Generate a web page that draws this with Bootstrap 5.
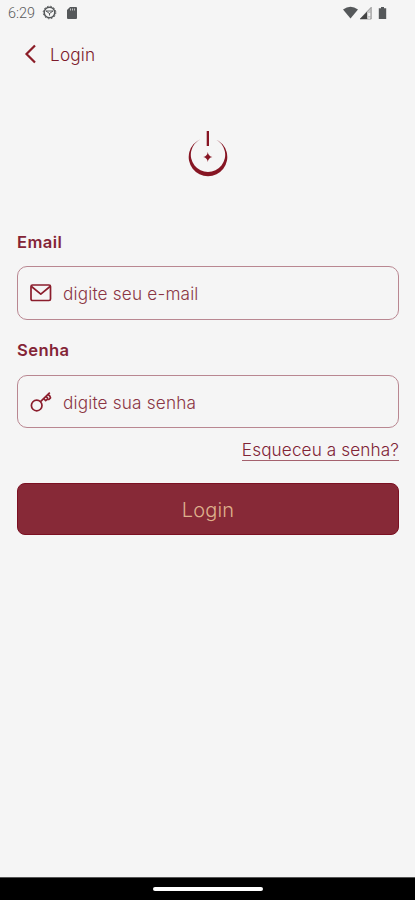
<!DOCTYPE html>
<html lang="pt-BR">
<head>
<meta charset="utf-8">
<meta name="viewport" content="width=device-width, initial-scale=1">
<title>Login</title>
<link href="https://cdn.jsdelivr.net/npm/bootstrap@5.3.0/dist/css/bootstrap.min.css" rel="stylesheet">
<style>
:root{--wine:#7d1a2b}
body{font-family:Inter,"Liberation Sans",sans-serif;background:#f5f5f5;color:var(--wine);height:900px;overflow:hidden}
svg{display:block;flex:none}
.status-bar{height:25px;padding:0 27px 0 8px;color:#55585a}
.clock{font:300 14.4px/25px Roboto,sans-serif;width:34px;color:#5a5a5a;padding-top:1px}
.top-bar{height:58px;padding-left:24px}
.top-title{font-size:17.2px;font-weight:300;letter-spacing:.2px;margin-left:12px;padding-top:1px}
.brand-mark{padding-top:47px;height:147px}
.login-form{padding-left:1px}
.field-label{font-size:16.6px;font-weight:600;line-height:24px;letter-spacing:.4px;color:#842436}
.field-box{border:1px solid #b98791;border-radius:10px;padding-left:11px;height:54px;margin-top:12px}
.field-box .form-control{font-size:17.2px;font-weight:300;letter-spacing:.18px;color:var(--wine);padding:1px 0 0 10px;height:51px;line-height:50px}
.field-box .form-control::placeholder{color:#8b3544;opacity:1}
.field-gap{margin-top:18px}
.field-short{height:53px;margin-top:13px}
.forgot{font-size:17.2px;font-weight:300;line-height:20px;letter-spacing:.1px;margin-top:12px;color:#802335;border-bottom:1px solid #a4616d}
.btn-wine{--bs-btn-bg:#872937;--bs-btn-border-color:#7b1022;--bs-btn-color:#deb08c;--bs-btn-hover-bg:#7b1022;--bs-btn-hover-color:#deb08c;height:52px;margin-top:22px;border-radius:8px;font-size:20px;font-weight:300;letter-spacing:.2px;padding:1px 0 0}
.home-bar{height:23px;background:#000;border-top:1px solid #555}
.home-pill{width:110px;height:4px;border-radius:2px;background:#fff}
</style>
</head>
<body class="d-flex flex-column">
<div class="status-bar d-flex align-items-center">
  <span class="clock">6:29</span>
  <svg width="15" height="15" viewBox="0 0 15 15" fill="none" stroke="currentColor"><circle cx="7.5" cy="7.5" r="5.3" stroke-width="1.5"/><circle cx="7.5" cy="7.5" r="6.3" stroke-width="1" stroke-dasharray="1.5 1.8"/><path d="M4 6h7L7.5 8.5zM7.5 8v2.5" stroke-width="1"/></svg>
  <svg class="ms-2" width="13" height="14" viewBox="0 0 13 14"><path d="M5 1h6q1 0 1 1v10q0 1-1 1H3q-1 0-1-1V4z" fill="currentColor"/><path d="M5.5 2.5v2M7.5 2.5v2M9.5 2.5v2" stroke="#ddd" stroke-width=".8"/></svg>
  <svg class="ms-auto" width="15" height="13" viewBox="0 0 15 13"><path d="M0 3.500Q7.500-2 15 3.500L7.500 12.500z" fill="currentColor"/></svg>
  <svg width="15" height="14" viewBox="0 0 15 14"><path d="M2 13 13.200 1.300V13z" fill="#c9c9c9" stroke="#777" stroke-width=".7"/><path d="M2 13 9 5.700V13z" fill="#444"/><path d="M11.200 7v3M11.200 11.500v1.300" stroke="#f5f5f5" stroke-width="2"/></svg>
  <svg class="ms-1" width="11" height="14" viewBox="0 0 11 14"><path d="M4 1h3v1.300h2.200V13H1.800V2.300H4z" fill="currentColor"/></svg>
</div>
<header class="top-bar d-flex align-items-center">
  <svg width="14" height="20" viewBox="0 0 14 20" fill="none" stroke="#8b1d27" stroke-width="2.200"><path d="M11 1.500 2.500 10l8.500 8.500"/></svg>
  <span class="top-title">Login</span>
</header>
<div class="brand-mark d-flex justify-content-center">
  <svg width="42" height="49" viewBox="0 0 42 49" fill="#861523"><path d="M13.500 9.200A19.300 19.300 0 1 0 28.500 9.200A17.200 17.200 0 1 1 13.500 9.200Z"/><path d="M19.700 1h2.300v15h-2.300z"/><path d="M20.800 22q.5 4.200 4.600 5-4.100.8-4.600 5-.5-4.200-4.600-5 4.100-.8 4.600-5Z"/></svg>
</div>
<main class="flex-grow-1 px-3">
  <form class="login-form d-flex flex-column">
    <label class="field-label" for="email">Email</label>
    <div class="field-box d-flex align-items-center">
      <svg width="24" height="24" viewBox="0 0 24 24" fill="none" stroke="#8b1d2c" stroke-width="1.700" stroke-linejoin="round"><rect x="2" y="4" width="19.500" height="15.500" rx="1.500"/><path d="m2.500 5.500 9.300 7.700L21 5.500"/></svg>
      <input class="form-control border-0 bg-transparent shadow-none" id="email" type="email" placeholder="digite seu e-mail">
    </div>
    <label class="field-label field-gap" for="senha">Senha</label>
    <div class="field-box field-short d-flex align-items-center">
      <svg width="24" height="24" viewBox="0 0 24 24" fill="none" stroke="#8b1d2c" stroke-width="1.700" stroke-linejoin="round"><circle cx="7.700" cy="15.500" r="5.300"/><path d="m11.500 11.700 9.300-9M14.700 8.500l2 2.200 1.800-1.500 1.400.3 1.600-1.700-.6-1.600-2.400-2.400M16.900 6.400l2 2"/></svg>
      <input class="form-control border-0 bg-transparent shadow-none" id="senha" type="password" placeholder="digite sua senha">
    </div>
    <a class="forgot align-self-end text-decoration-none" href="#">Esqueceu a senha?</a>
    <button class="btn btn-wine w-100" type="button">Login</button>
  </form>
</main>
<footer class="home-bar d-flex justify-content-center align-items-center"><span class="home-pill"></span></footer>
<script src="https://cdn.jsdelivr.net/npm/bootstrap@5.3.0/dist/js/bootstrap.bundle.min.js"></script>
</body>
</html>
